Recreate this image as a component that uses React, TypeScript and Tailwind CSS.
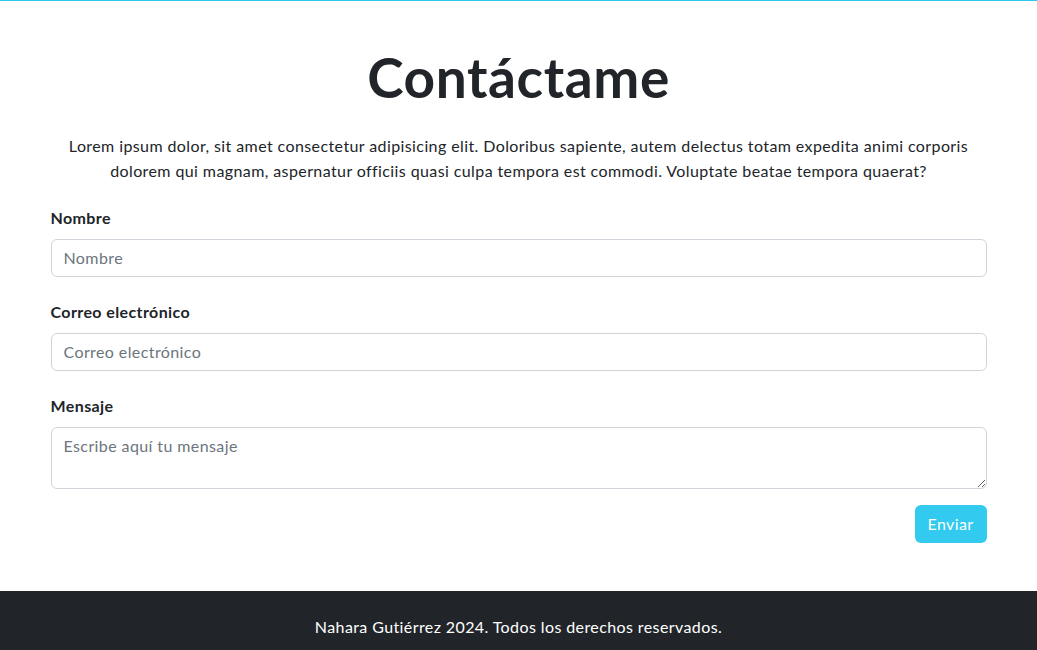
const fields = [
	{ id: 'nombre', label: 'Nombre', type: 'text', placeholder: 'Nombre' },
	{ id: 'correo', label: 'Correo electrónico', type: 'email', placeholder: 'Correo electrónico' },
];

const inputClass =
	'block w-full rounded-[6px] border border-[#ced4da] bg-white px-3 py-[6px] text-base leading-6 tracking-[0.4px] text-[#212529] placeholder:text-[#6c757d] outline-none';

const App = () => {
	return (
		<div className="min-h-screen bg-white text-[#212529] tracking-[0.4px] font-['Lato','Open_Sans',sans-serif]">
			<div className="border-t border-[#2fc9ee]" />

			<main className="mx-auto w-[960px] px-3 pt-[43px] pb-12">
				<h1 className="text-center text-[55px] font-bold leading-[1.2] tracking-[0.6px] text-[#212529]">Contáctame</h1>

				<p className="mt-[23px] text-center text-base leading-[25px]">
					Lorem ipsum dolor, sit amet consectetur adipisicing elit. Doloribus sapiente, autem delectus totam expedita animi corporis
					<br />
					dolorem qui magnam, aspernatur officiis quasi culpa tempora est commodi. Voluptate beatae tempora quaerat?
				</p>

				<form className="mt-[23px]">
					{fields.map((field) => (
						<div key={field.id} className="mb-[23px]">
							<label htmlFor={field.id} className="mb-[9px] block text-base font-bold leading-6">
								{field.label}
							</label>
							<input id={field.id} type={field.type} placeholder={field.placeholder} className={inputClass} />
						</div>
					))}

					<div>
						<label htmlFor="mensaje" className="mb-[9px] block text-base font-bold leading-6">
							Mensaje
						</label>
						<textarea id="mensaje" rows={2} placeholder="Escribe aquí tu mensaje" className={inputClass + ' h-[62px]'} />
					</div>

					<div className="mt-4 flex justify-end">
						<button type="button" className="h-[38px] w-[72px] rounded-[6px] bg-[#32cbef] text-base text-white">
							Enviar
						</button>
					</div>
				</form>
			</main>

			<footer className="bg-[#212529] py-6 text-center text-base leading-6 text-white">
				Nahara Gutiérrez 2024. Todos los derechos reservados.
			</footer>
		</div>
	);
};

export default App;
